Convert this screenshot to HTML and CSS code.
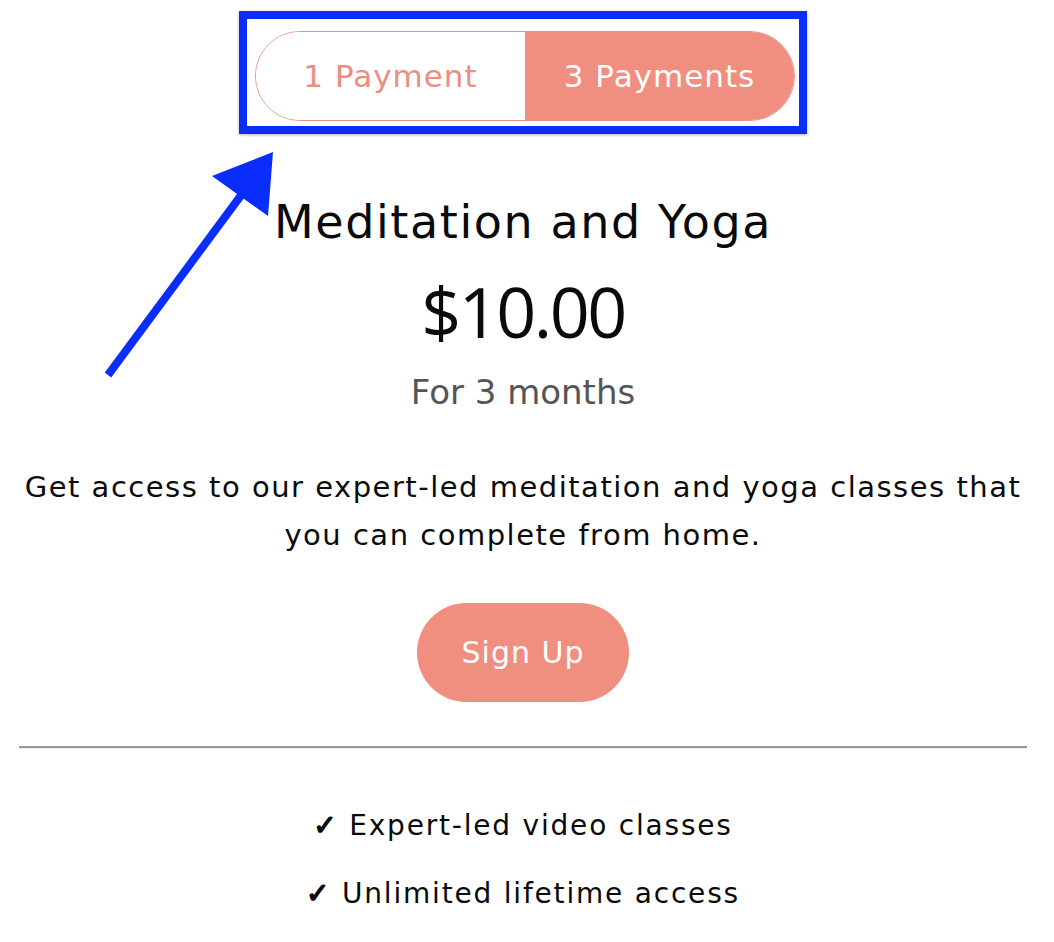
FILE: index.html
```html
<!DOCTYPE html>
<html>
<head>
<meta charset="utf-8">
<link rel="stylesheet" href="styles.css">
</head>
<body>
<main class="page">
  <div class="highlight">
    <div class="toggle">
      <button class="opt">1 Payment</button>
      <button class="opt active">3 Payments</button>
    </div>
  </div>
  <h1 class="title">Meditation and Yoga</h1>
  <div class="price">$10.00</div>
  <div class="period">For 3 months</div>
  <p class="desc">Get access to our expert-led meditation and yoga classes that you can complete from home.</p>
  <button class="signup">Sign Up</button>
  <hr class="rule">
  <ul class="features">
    <li><span class="check">✓</span> Expert-led video classes</li>
    <li><span class="check">✓</span> Unlimited lifetime access</li>
  </ul>
</main>
<svg class="arrow" width="1054" height="942" viewBox="0 0 1054 942">
  <line x1="108" y1="375" x2="245" y2="190" stroke="#0a2dfc" stroke-width="8"/>
  <polygon points="273,152 212,176 268,216" fill="#0a2dfc"/>
</svg>
</body>
</html>
```
FILE: styles.css
```css
html, body {
  margin: 0;
  padding: 0;
  background: #fff;
}
body {
  font-family: "DejaVu Sans", "Open Sans", sans-serif;
  color: #0a0a0a;
  position: relative;
  width: 1054px;
  height: 942px;
  overflow: hidden;
}
.page {
  margin-left: 19px;
  width: 1008px;
  display: flex;
  flex-direction: column;
  align-items: center;
  text-align: center;
  padding-top: 11px;
}
.highlight {
  border: 8px solid #0a2dfc;
  padding: 12px 4px 5px 8px;
  box-shadow: 0 1px 3px rgba(0,0,0,0.3);
}
.toggle {
  display: flex;
  width: 540px;
  height: 90px;
  box-sizing: border-box;
  border: 1.5px solid #e89383;
  border-radius: 45px;
  overflow: hidden;
}
.opt {
  flex: 1;
  border: 0;
  background: #fff;
  color: #ec8e7f;
  font-family: inherit;
  font-size: 31px;
  font-weight: 400;
  letter-spacing: 1px;
  padding: 0;
}
.opt.active {
  background: #f08e80;
  color: #fff;
}
.title {
  margin: 58px 0 0;
  font-size: 46px;
  font-weight: 400;
  line-height: 60px;
  letter-spacing: 1.6px;
}
.price {
  margin-top: 19px;
  font-family: "Open Sans", sans-serif;
  font-size: 70px;
  line-height: 80px;
  letter-spacing: -2.5px;
}
.period {
  margin-top: 21px;
  font-size: 34px;
  color: #555;
  line-height: 40px;
}
.desc {
  margin: 51px 0 0;
  font-size: 29px;
  line-height: 48px;
  letter-spacing: 1.5px;
  width: 1008px;
}
.signup {
  margin-top: 44px;
  width: 212px;
  height: 99px;
  border: 0;
  border-radius: 50px;
  background: #f08e80;
  color: #fff;
  font-family: inherit;
  font-size: 30px;
  font-weight: 400;
  letter-spacing: 1px;
}
.rule {
  width: 1008px;
  margin: 44px 0 0;
  border: 0;
  border-top: 2px solid #999;
  border-bottom: 1px solid #eee;
}
.features {
  list-style: none;
  margin: 57px 0 0;
  padding: 0;
  font-size: 28px;
  letter-spacing: 1.8px;
}
.features li {
  line-height: 40px;
  margin-bottom: 28px;
}
.check {
  -webkit-text-stroke: 1.4px currentColor;
}
.arrow {
  position: absolute;
  left: 0;
  top: 0;
  pointer-events: none;
}
```
